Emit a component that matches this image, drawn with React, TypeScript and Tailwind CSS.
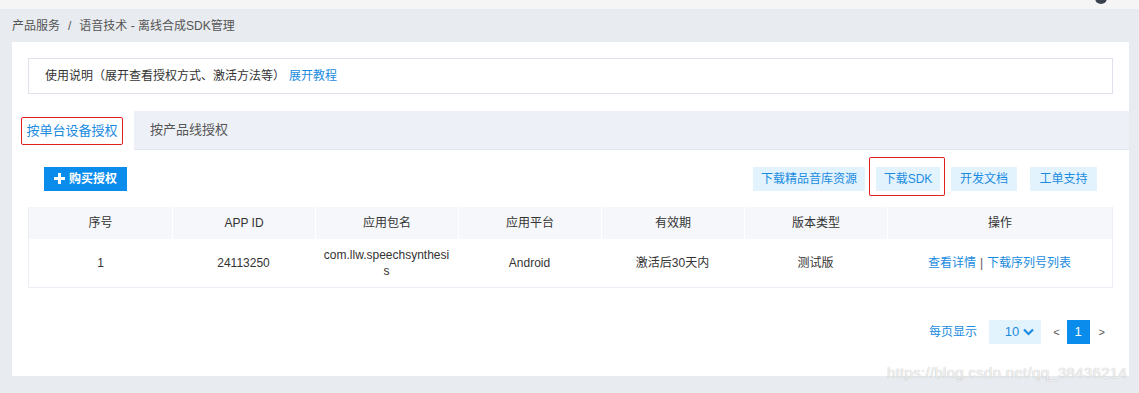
import { useState } from "react";

const font = {
  fontFamily: '"Liberation Sans", "Noto Sans CJK SC", sans-serif',
};

const columns = [
  { key: "no", title: "序号", w: "w-[143px]" },
  { key: "appid", title: "APP ID", w: "w-[143px]" },
  { key: "pkg", title: "应用包名", w: "w-[143px]" },
  { key: "platform", title: "应用平台", w: "w-[143px]" },
  { key: "expire", title: "有效期", w: "w-[143px]" },
  { key: "type", title: "版本类型", w: "w-[143px]" },
  { key: "ops", title: "操作", w: "flex-1" },
];

const ActionButton = ({ children, w }: { children: React.ReactNode; w: string }) => (
  <button className={`${w} h-6 bg-[#e3f3fe] text-[#1a8be0] text-xs leading-6 text-center`}>
    {children}
  </button>
);

export default function App() {
  const [tab, setTab] = useState(0);

  return (
    <div
      className="relative w-[1139px] h-[393px] overflow-hidden bg-[#e8ebef] text-[#333]"
      style={font}
    >
      {/* top bar */}
      <div className="relative h-[9px] bg-[#f5f5f5]">
        <div className="absolute right-[32px] -top-[8px] w-[12px] h-[12px] rounded-full bg-[#3a4250]" />
      </div>

      {/* breadcrumb */}
      <div className="h-[33px] pl-3 flex items-center text-xs text-[#555]">
        产品服务 <span className="mx-2">/</span> 语音技术 - 离线合成SDK管理
      </div>

      {/* main panel */}
      <div className="ml-3 mr-[10px] h-[334px] bg-white pt-4">
        <div className="mx-4 h-9 border border-[#e1e1ee] flex items-center pl-4 text-xs">
          <span>使用说明（展开查看授权方式、激活方法等）</span>
          <a className="ml-1 text-[#1a8be0] cursor-pointer">展开教程</a>
        </div>

        {/* tabs */}
        <div className="mt-[17px] h-[39px] bg-[#edf1f7] border-b border-[#e3e7ee] flex">
          <div
            onClick={() => setTab(0)}
            className={`w-[122px] pr-[2px] flex items-center justify-center cursor-pointer ${
              tab === 0 ? "bg-white h-[40px]" : ""
            }`}
          >
            <span className="border border-[#e0201e] rounded-[2px] w-[102px] h-7 flex items-center justify-center text-[13px] text-[#1a8be0]">
              按单台设备授权
            </span>
          </div>
          <div
            onClick={() => setTab(1)}
            className="px-4 flex items-center text-[13px] text-[#555] cursor-pointer"
          >
            按产品线授权
          </div>
        </div>

        {/* toolbar */}
        <div className="mt-4 pl-8 pr-[32px] flex items-center justify-between">
          <button className="h-6 w-[83px] bg-[#0a8cec] text-white text-xs font-bold flex items-center justify-center gap-1">
            <svg width="11" height="11" viewBox="0 0 11 11">
              <path d="M4 0h3v4h4v3H7v4H4V7H0V4h4z" fill="#fff" />
            </svg>
            购买授权
          </button>
          <div className="flex items-center">
            <ActionButton w="w-[112px]">下载精品音库资源</ActionButton>
            <div className="relative ml-[11px]">
              <ActionButton w="w-[64px]">下载SDK</ActionButton>
              <div className="absolute -left-[7px] -right-[5px] -top-[9px] -bottom-[5px] rounded-[2px] pointer-events-none shadow-[inset_0_0_0_1px_#e0201e]" />
            </div>
            <div className="ml-[11px]">
              <ActionButton w="w-[66px]">开发文档</ActionButton>
            </div>
            <div className="ml-[13px]">
              <ActionButton w="w-[67px]">工单支持</ActionButton>
            </div>
          </div>
        </div>

        {/* table */}
        <div className="mt-4 mx-4 border border-[#ebeef5] border-t-0">
          <div className="flex h-8 bg-[#f5f7fa] text-xs text-[#333]">
            {columns.map((c, i) => (
              <div
                key={c.key}
                className={`${c.w} flex items-center justify-center ${
                  i > 0 ? "border-l border-white" : ""
                }`}
              >
                {c.title}
              </div>
            ))}
          </div>
          <div className="flex h-12 text-xs text-[#333]">
            <div className="w-[143px] flex items-center justify-center">1</div>
            <div className="w-[143px] flex items-center justify-center">24113250</div>
            <div className="w-[143px] flex items-center justify-center text-center leading-4 px-2 break-all">
              com.llw.speechsynthesis
            </div>
            <div className="w-[143px] flex items-center justify-center">Android</div>
            <div className="w-[143px] flex items-center justify-center">激活后30天内</div>
            <div className="w-[143px] flex items-center justify-center">测试版</div>
            <div className="flex-1 flex items-center justify-center text-[#1a8be0]">
              查看详情<span className="mx-1 text-[#555]">|</span>下载序列号列表
            </div>
          </div>
        </div>

        {/* pagination */}
        <div className="mt-8 pr-6 flex items-center justify-end text-xs">
          <span className="text-[#1a8be0]">每页显示</span>
          <div className="ml-[12px] w-[52px] h-6 bg-[#e3f3fe] flex items-center justify-end pr-[7px] gap-1 text-[#1a8be0]">
            <span className="text-[13px]">10</span>
            <svg width="11" height="8" viewBox="0 0 11 8">
              <path d="M1 1.5l4.5 4.5 4.5-4.5" stroke="#1a8be0" strokeWidth="2.2" fill="none" />
            </svg>
          </div>
          <span className="ml-3 text-[#555] text-[11px]">&lt;</span>
          <span className="ml-[7px] w-[23px] h-6 bg-[#0a8cec] text-white flex items-center justify-center text-[13px]">
            1
          </span>
          <span className="ml-[9px] text-[#555] text-[11px]">&gt;</span>
        </div>
      </div>

      {/* watermark */}
      <div className="absolute left-[887px] top-[364px] text-[15px] leading-[18px] text-white/80 tracking-[0.3px] pointer-events-none [text-shadow:0_0_1px_rgba(0,0,0,0.35)]">
        https://blog.csdn.net/qq_38436214
      </div>
    </div>
  );
}
